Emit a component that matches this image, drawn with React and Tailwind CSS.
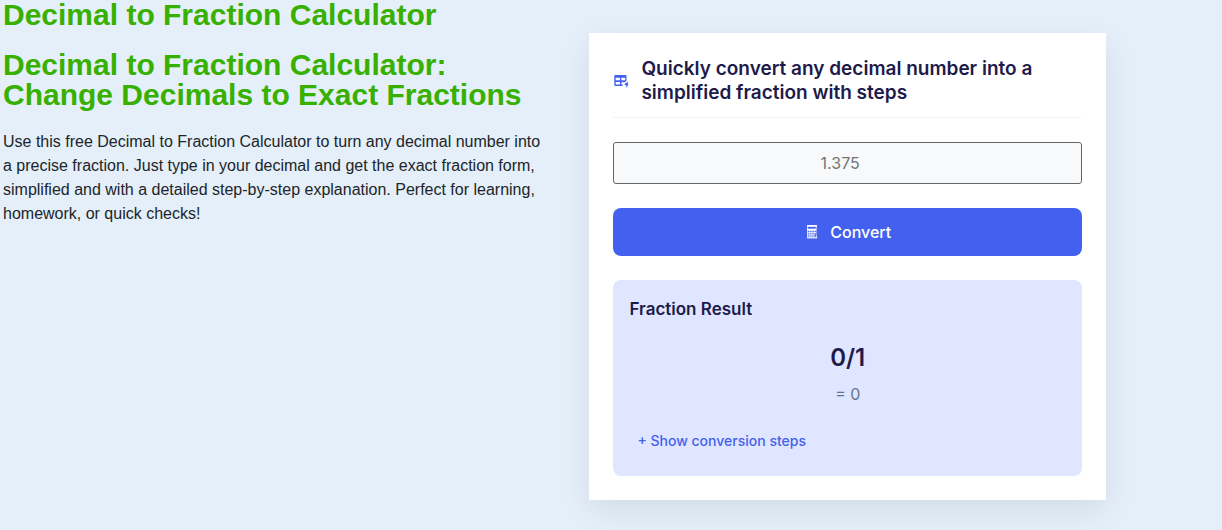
import { useState } from "react";

function TableFlashIcon() {
  return (
    <svg viewBox="0 0 16 16" className="size-4 shrink-0 text-[#4361ee]" fill="currentColor" aria-hidden="true">
      <path
        fillRule="evenodd"
        d="M2.3 2H12.5Q13.5 2 13.5 3V7.6L12 9.2H8.4V11.5H9.6V13H2.3Q1.3 13 1.3 12V3Q1.3 2 2.3 2ZM2.7 4.8V7.2H6.9V4.8ZM8.3 4.8V7.2H12.2V4.8ZM2.7 8.9V11.6H6.9V8.9Z"
      />
      <path d="M14.8 8.5V10.9H15.6L13.3 15V12.2H11.7V11Z" />
    </svg>
  );
}

function CalculatorIcon() {
  return (
    <svg viewBox="0 0 16 16" className="size-4 shrink-0" aria-hidden="true">
      <path d="M3 1H13V3.2L12.5 4V11.5L13.2 12.6V14.5H3Z" fill="white" fillOpacity="0.8" />
      <path d="M4 3H11.8V4.6H4Z" fill="#4361ee" />
      <path d="M3 5.5H12.4M3 1.5H13" stroke="white" strokeWidth="1" />
      <path
        d="M4 7H5.2V8.1H4ZM6.2 7H7.4V8.1H6.2ZM8.4 7H9.6V8.1H8.4ZM10.6 7H11.8V8.1H10.6ZM4 9.2H5.2V10.3H4ZM6.2 9.2H7.4V10.3H6.2ZM8.4 9.2H9.6V10.3H8.4ZM10.6 9.2H11.8V13H10.6ZM4 11.4H5.2V12.5H4ZM6.2 11.4H7.4V12.5H6.2ZM8.4 11.4H9.6V12.5H8.4Z"
        fill="#4361ee"
      />
    </svg>
  );
}

function gcd(a, b) {
  return b === 0 ? a : gcd(b, a % b);
}

function toFraction(text) {
  const value = Number(text) || 0;
  const digits = (String(value).split(".")[1] || "").length;
  const scale = 10 ** digits;
  const top = Math.round(value * scale);
  const divisor = gcd(Math.abs(top), scale) || 1;
  return { value, top, scale, divisor, fraction: `${top / divisor}/${scale / divisor}` };
}

export default function App() {
  const [decimal, setDecimal] = useState("");
  const [result, setResult] = useState(toFraction("0"));
  const [open, setOpen] = useState(false);

  function convert(event) {
    event.preventDefault();
    setResult(toFraction(decimal));
  }

  return (
    <main className="grid min-h-screen grid-cols-1 items-start bg-[#e4eff9] pr-[116px] font-['Liberation_Sans',Arial,sans-serif] text-[#212529] md:grid-cols-[15fr_14fr] md:gap-9">
      <section className="pr-2 pl-[3px]">
        <h1 className="mb-5 text-[30px] leading-[30px] font-bold text-[#38b000]">Decimal to Fraction Calculator</h1>
        <h2 className="mb-5 text-[30px] leading-[30px] font-bold text-[#38b000]">
          Decimal to Fraction Calculator: Change Decimals to Exact Fractions
        </h2>
        <p className="text-base leading-6">
          Use this free Decimal to Fraction Calculator to turn any decimal number into a precise fraction. Just type in
          your decimal and get the exact fraction form, simplified and with a detailed step-by-step explanation. Perfect
          for learning, homework, or quick checks!
        </p>
      </section>

      <section className="mt-[33px] mb-[30px] bg-white p-6 font-[Inter,sans-serif] shadow-[0_10px_30px_rgba(0,0,0,0.08)]">
        <header className="flex items-center gap-3 border-b border-[#f1f3f5] pb-3 text-[#1e1b4b]">
          <TableFlashIcon />
          <h2 className="text-[19px] leading-6 font-semibold">
            Quickly convert any decimal number into a simplified fraction with steps
          </h2>
        </header>
        <form onSubmit={convert} className="mt-6 flex flex-col gap-6">
          <input
            type="number"
            step="any"
            aria-label="Decimal number"
            placeholder="1.375"
            value={decimal}
            onChange={(event) => setDecimal(event.target.value)}
            className="h-[42px] w-full rounded-[3px] border border-[#666666] bg-[#f8f9fa] px-3 text-center text-base placeholder:text-[#757575]"
          />
          <button
            type="submit"
            className="flex h-12 w-full items-center justify-center gap-2.5 rounded-lg bg-[#4361ee] text-base font-medium text-white"
          >
            <CalculatorIcon />
            Convert
          </button>
        </form>
        <div className="mt-6 rounded-lg bg-[#e0e6ff] p-4">
          <h3 className="text-[17px] leading-[26px] font-semibold text-[#1e1b4b]">Fraction Result</h3>
          <div className="pt-5 text-center">
            <p className="text-2xl leading-8 font-semibold text-[#1e1b4b]">{result.fraction}</p>
            <p className="mt-2 text-base leading-6 text-[#64748b]">= {result.value}</p>
          </div>
          <button
            type="button"
            aria-expanded={open}
            onClick={() => setOpen(!open)}
            className="mt-4 block px-2 py-2 text-sm leading-[22px] font-medium text-[#4361ee]"
          >
            {open ? "− Hide conversion steps" : "+ Show conversion steps"}
          </button>
          {open && (
            <ol className="list-decimal pl-8 text-sm leading-6">
              <li>
                Write {result.value} as {result.top}/{result.scale}.
              </li>
              <li>
                Divide both parts by {result.divisor} to get {result.fraction}.
              </li>
            </ol>
          )}
        </div>
      </section>
    </main>
  );
}
